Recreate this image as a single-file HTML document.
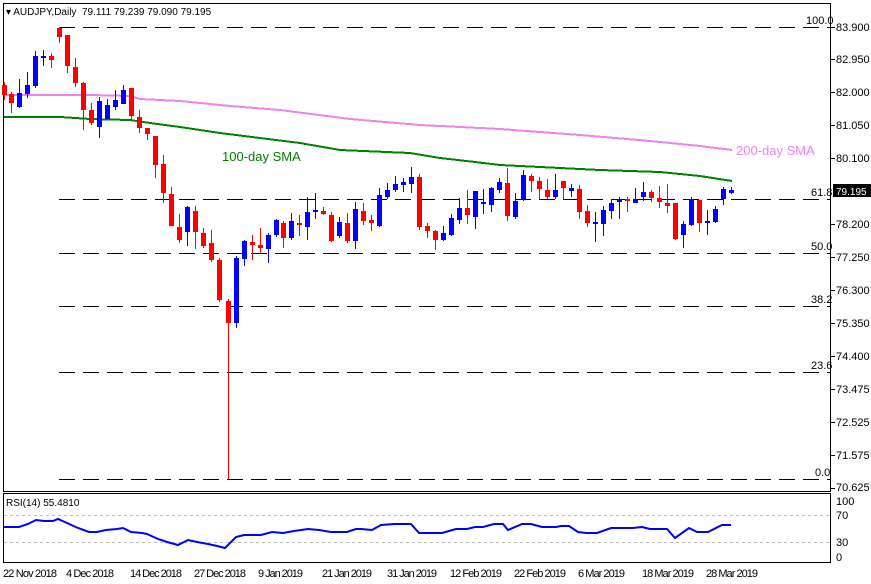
<!DOCTYPE html>
<html><head><meta charset="utf-8"><style>
body{margin:0;background:#fff;width:871px;height:584px;overflow:hidden;font-family:"Liberation Sans",sans-serif}
svg{position:absolute;left:0;top:0}
text{font-family:"Liberation Sans",sans-serif;font-size:11px;fill:#000}
</style></head><body>
<svg id="s" width="871" height="584" viewBox="0 0 871 584" shape-rendering="crispEdges">
<rect x="3.5" y="3.5" width="827" height="488" fill="none" stroke="#000"/>
<rect x="3.5" y="493.5" width="827" height="69" fill="none" stroke="#000"/>
<g stroke="#000" stroke-dasharray="16 8" stroke-width="1">
<line x1="59" y1="27.5" x2="830" y2="27.5"/>
<line x1="59" y1="199.5" x2="830" y2="199.5"/>
<line x1="59" y1="253.5" x2="830" y2="253.5"/>
<line x1="59" y1="306.5" x2="830" y2="306.5"/>
<line x1="59" y1="372.5" x2="830" y2="372.5"/>
<line x1="59" y1="479.5" x2="830" y2="479.5"/>
</g>
<g style="font-size:10px"><text x="806" y="24">100.0</text><text x="811" y="196">61.8</text><text x="811" y="250">50.0</text><text x="811" y="303">38.2</text><text x="811" y="369">23.6</text><text x="815" y="476">0.0</text></g>
<polyline fill="none" stroke="#ee82ee" stroke-width="2" points="4,95 90,95 130,96 140,99 180,101 230,106 280,110 350,119 420,125 500,129 580,135 650,141 700,146 732,150"/>
<polyline fill="none" stroke="#008000" stroke-width="2" points="4,117 60,117 90,119 130,120 150,123 180,127 220,133 260,138 300,143 340,150 410,153 440,158 475,162 500,165 540,167 600,170 660,172 700,176 732,181"/>
<g id="c"></g>
<text x="222" y="161" style="font-size:13px;fill:#008000">100-day SMA</text>
<text x="736" y="155" style="font-size:13px;fill:#ee82ee">200-day SMA</text>
<text x="6" y="15" style="font-size:10px">▾ AUDJPY,Daily&#160; 79.111 79.239 79.090 79.195</text>
<g stroke="#000"><line x1="831" y1="27.5" x2="835" y2="27.5"/><line x1="831" y1="59.5" x2="835" y2="59.5"/><line x1="831" y1="92.5" x2="835" y2="92.5"/><line x1="831" y1="125.5" x2="835" y2="125.5"/><line x1="831" y1="158.5" x2="835" y2="158.5"/><line x1="831" y1="224.5" x2="835" y2="224.5"/><line x1="831" y1="257.5" x2="835" y2="257.5"/><line x1="831" y1="290.5" x2="835" y2="290.5"/><line x1="831" y1="323.5" x2="835" y2="323.5"/><line x1="831" y1="356.5" x2="835" y2="356.5"/><line x1="831" y1="389.5" x2="835" y2="389.5"/><line x1="831" y1="422.5" x2="835" y2="422.5"/><line x1="831" y1="455.5" x2="835" y2="455.5"/><line x1="831" y1="488.5" x2="835" y2="488.5"/></g>
<g style="font-size:10px">
<text x="836" y="31">83.900</text><text x="836" y="63">82.950</text><text x="836" y="96">82.000</text><text x="836" y="129">81.050</text><text x="836" y="162">80.100</text>
<rect x="833" y="184" width="38" height="13" fill="#000"/><text x="836" y="195" style="fill:#fff;font-size:10px">79.195</text>
<text x="836" y="228">78.200</text><text x="836" y="261">77.250</text><text x="836" y="294">76.300</text><text x="836" y="327">75.350</text><text x="836" y="360">74.400</text><text x="836" y="393">73.475</text><text x="836" y="426">72.525</text><text x="836" y="459">71.575</text><text x="836" y="491">70.625</text>
<text x="836" y="505">100</text><text x="836" y="519">70</text><text x="836" y="546">30</text><text x="836" y="561">0</text>
</g>
<g stroke="#c0c0c0" stroke-dasharray="3 3"><line x1="4" y1="515.5" x2="830" y2="515.5"/><line x1="4" y1="542.5" x2="830" y2="542.5"/></g>
<text x="6" y="506" style="font-size:10px">RSI(14) 55.4810</text>
<polyline fill="none" stroke="#0000ff" stroke-width="2" shape-rendering="auto" points="4,527 19,527 28,524 36,520 44,521 53,521 58,519 67,523 78,528 89,532 97,532 106,530 117,529 123,528 131,532 142,533 147,534 158,539 167,542 178,545 188,540 197,542 208,544 217,546 225,548 236,537 244,535 261,535 272,532 283,533 294,531 308,529 319,530 331,532 339,532 347,532 356,529 361,529 372,530 381,525 394,524 411,524 419,533 431,533 442,533 456,529 467,529 475,527 483,527 494,524 503,524 508,530 522,524 531,524 542,527 556,527 561,526 569,526 578,532 586,533 597,533 611,528 619,528 633,528 642,527 650,529 667,529 675,538 689,528 697,532 708,532 722,525 731,525"/>
<g style="font-size:9.5px">
<text x="3" y="577" textLength="54">22 Nov 2018</text><text x="66" y="577" textLength="48">4 Dec 2018</text><text x="130" y="577" textLength="52">14 Dec 2018</text><text x="194" y="577" textLength="52">27 Dec 2018</text><text x="258" y="577" textLength="45">9 Jan 2019</text><text x="322" y="577" textLength="50">21 Jan 2019</text><text x="387" y="577" textLength="50">31 Jan 2019</text><text x="450" y="577" textLength="52">12 Feb 2019</text><text x="514" y="577" textLength="52">22 Feb 2019</text><text x="578" y="577" textLength="47">6 Mar 2019</text><text x="642" y="577" textLength="52">18 Mar 2019</text><text x="706" y="577" textLength="52">28 Mar 2019</text>
</g>
</svg>
<script>
var R='#ff0000',B='#0000ff';
var d=[[4,85,95,82,100,R],[11,94,103,92,113,R],[19,93,107,79,108,B],[27,85,94,72,98,B],[35,56,86,51,88,B],[43,56,58,50,66,B],[51,56,60,53,68,R],[59,28,37,27,43,R],[67,35,66,35,73,R],[75,67,83,58,87,R],[83,83,110,82,130,R],[91,110,123,103,125,R],[99,101,127,97,138,B],[107,105,119,99,119,B],[115,100,107,90,110,B],[123,90,104,85,104,B],[131,88,116,88,120,R],[139,117,128,110,133,R],[147,128,134,128,140,R],[155,136,165,136,178,R],[163,164,193,155,203,R],[171,194,226,187,226,R],[179,227,240,214,243,R],[187,207,232,206,246,B],[195,211,232,206,249,R],[203,233,246,228,248,R],[211,243,260,230,262,R],[219,260,300,258,302,R],[228,301,323,299,479,R],[236,258,323,256,328,B],[244,241,259,240,266,B],[252,242,245,235,260,R],[260,245,248,228,253,R],[268,235,249,233,263,B],[276,220,235,219,237,B],[283,223,238,221,248,R],[291,221,238,213,240,B],[299,223,225,215,236,R],[307,212,227,197,240,B],[315,210,212,193,219,B],[323,211,214,207,215,R],[331,215,241,212,242,R],[339,222,236,217,238,B],[347,223,241,213,243,R],[355,209,241,202,249,B],[363,211,221,203,225,R],[371,220,223,215,231,R],[379,195,226,188,227,B],[387,190,197,183,199,B],[395,184,190,176,192,B],[403,182,185,178,192,B],[411,177,184,167,193,B],[419,177,227,174,230,R],[427,226,231,223,238,R],[435,231,240,230,250,R],[443,233,240,226,241,B],[451,218,235,214,236,B],[459,208,220,198,224,B],[467,208,215,190,224,R],[475,191,217,191,229,B],[483,202,203,189,214,B],[491,188,205,187,212,B],[499,182,190,178,193,B],[507,183,216,168,221,R],[515,201,217,193,219,B],[523,175,200,170,201,B],[531,176,181,174,192,R],[539,181,189,177,199,R],[547,190,197,179,199,R],[555,190,197,174,199,B],[563,181,188,181,199,R],[571,188,191,184,197,B],[579,189,212,185,219,R],[587,211,223,205,227,R],[595,222,223,212,242,B],[603,210,224,206,236,B],[611,203,211,199,219,B],[619,199,202,197,219,B],[627,199,201,197,212,R],[635,199,203,188,201,B],[643,192,197,182,201,B],[651,192,198,190,202,R],[659,198,202,186,208,R],[667,203,206,184,213,R],[675,203,239,203,240,R],[683,224,235,221,248,B],[691,199,225,197,226,B],[699,200,223,200,232,R],[707,221,222,210,235,B],[715,209,222,206,223,B],[723,189,199,187,205,B],[731,190,193,187,194,B]];
var h='';d.forEach(function(c){h+='<line x1="'+(c[0]+.5)+'" x2="'+(c[0]+.5)+'" y1="'+c[3]+'" y2="'+c[4]+'" stroke="'+c[5]+'"/><rect x="'+(c[0]-2)+'" y="'+c[1]+'" width="5" height="'+Math.max(2,c[2]-c[1])+'" fill="'+c[5]+'"/>';});
document.getElementById('c').innerHTML=h;
</script>
</body></html>
